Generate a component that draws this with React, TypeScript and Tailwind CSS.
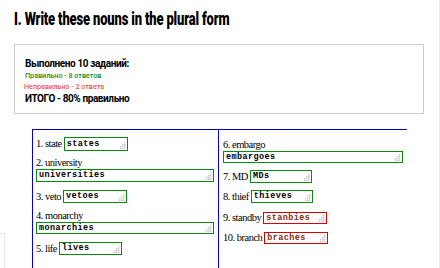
import React from 'react';

type Item = {
  n: number;
  word: string;
  answer: string;
  ok: boolean;
  block?: boolean;
  box: string; // size classes for the answer field
  gap: string; // margin above the item
};

const leftItems: Item[] = [
  { n: 1, word: 'state', answer: 'states', ok: true, box: 'w-[64px] h-[14px]', gap: 'mt-0' },
  { n: 2, word: 'university', answer: 'universities', ok: true, block: true, box: 'w-full h-[13px]', gap: 'mt-[6px]' },
  { n: 3, word: 'veto', answer: 'vetoes', ok: true, box: 'w-[64px] h-[13px]', gap: 'mt-[8px]' },
  { n: 4, word: 'monarchy', answer: 'monarchies', ok: true, block: true, box: 'w-full h-[12px]', gap: 'mt-[7px]' },
  { n: 5, word: 'life', answer: 'lives', ok: true, box: 'w-[63px] h-[13px]', gap: 'mt-[8px]' },
];

const rightItems: Item[] = [
  { n: 6, word: 'embargo', answer: 'embargoes', ok: true, block: true, box: 'w-full h-[12px]', gap: 'mt-[2px]' },
  { n: 7, word: 'MD', answer: 'MDs', ok: true, box: 'w-[62px] h-[13px]', gap: 'mt-[7px]' },
  { n: 8, word: 'thief', answer: 'thieves', ok: true, box: 'w-[62px] h-[13px]', gap: 'mt-[7px]' },
  { n: 9, word: 'standby', answer: 'stanbies', ok: false, box: 'w-[64px] h-[12px]', gap: 'mt-[9px]' },
  { n: 10, word: 'branch', answer: 'braches', ok: false, box: 'w-[64px] h-[12px]', gap: 'mt-[8px]' },
];

const Grip = () => (
  <svg className="absolute right-[1px] bottom-[1px]" width="7" height="7" viewBox="0 0 7 7">
    {[
      [5, 0], [5, 2], [3, 2], [5, 4], [3, 4], [1, 4], [5, 6], [3, 6], [1, 6],
    ].map(([x, y], i) => (
      <rect key={i} x={x} y={y} width="1.4" height="1.4" fill="#c4c4c4" />
    ))}
  </svg>
);

const Answer = ({ item }: { item: Item }) => (
  <div
    className={`relative flex items-center pl-[2px] border ${item.box} ${
      item.ok ? 'border-[#0a8a0a] text-black' : 'border-[#e00000] text-[#8a2a10]'
    }`}
  >
    <span className="font-['Liberation_Mono',monospace] font-bold text-[8.5px] tracking-[0.4px] leading-none">
      {item.answer}
    </span>
    <Grip />
  </div>
);

const Label = ({ item }: { item: Item }) => (
  <span className="font-['Liberation_Serif',serif] text-[10.5px] tracking-[-0.5px] leading-[12px] text-black whitespace-nowrap">
    {item.n}. {item.word}
  </span>
);

const Row = ({ item }: { item: Item }) =>
  item.block ? (
    <div className={`flex flex-col ${item.gap}`}>
      <Label item={item} />
      <Answer item={item} />
    </div>
  ) : (
    <div className={`flex items-center gap-[2px] ${item.gap}`}>
      <Label item={item} />
      <Answer item={item} />
    </div>
  );

export default function App() {
  return (
    <div className="relative w-[440px] h-[268px] overflow-hidden bg-white border-r border-[#ececec]">
      <h1 className="pl-[14px] pt-[9px] h-[44px] font-['Roboto',sans-serif] font-black text-[18px] leading-[20px] text-black">
        <span className="inline-block origin-left scale-x-[0.72] whitespace-nowrap tracking-[-0.2px]">
          I. Write these nouns in the plural form
        </span>
      </h1>

      <div className="ml-[14px] w-[410px] h-[70px] border border-[#cccccc] pl-[10px] pt-[12px] font-['Roboto',sans-serif]">
        <p className="text-[10px] font-bold tracking-[-0.4px] leading-[13px] text-black">Выполнено 10 заданий:</p>
        <p className="text-[7.2px] font-medium leading-[11px] text-[#128f12]">Правильно - 8 ответов</p>
        <p className="text-[7.2px] font-medium leading-[11px] text-[#f2553d] -ml-[1px]">Неправильно - 2 ответа</p>
        <p className="text-[10px] font-bold tracking-[-0.4px] leading-[13px] text-black">ИТОГО - 80% правильно</p>
      </div>

      <div className="ml-[32px] mt-[15px] w-[375px] h-[160px] border-t border-l border-[#0000e6] flex">
        <div className="w-[186px] pl-[3px] pr-[4px] pt-[7px] border-r border-[#0000e6] flex flex-col">
          {leftItems.map((it) => (
            <Row key={it.n} item={it} />
          ))}
        </div>
        <div className="flex-1 pl-[4px] pr-[4px] pt-[7px] flex flex-col">
          {rightItems.map((it) => (
            <Row key={it.n} item={it} />
          ))}
        </div>
      </div>

      <div className="absolute left-0 top-[233px] w-[5px] h-[40px] border-t border-r border-[#e6e6e6]" />
    </div>
  );
}
